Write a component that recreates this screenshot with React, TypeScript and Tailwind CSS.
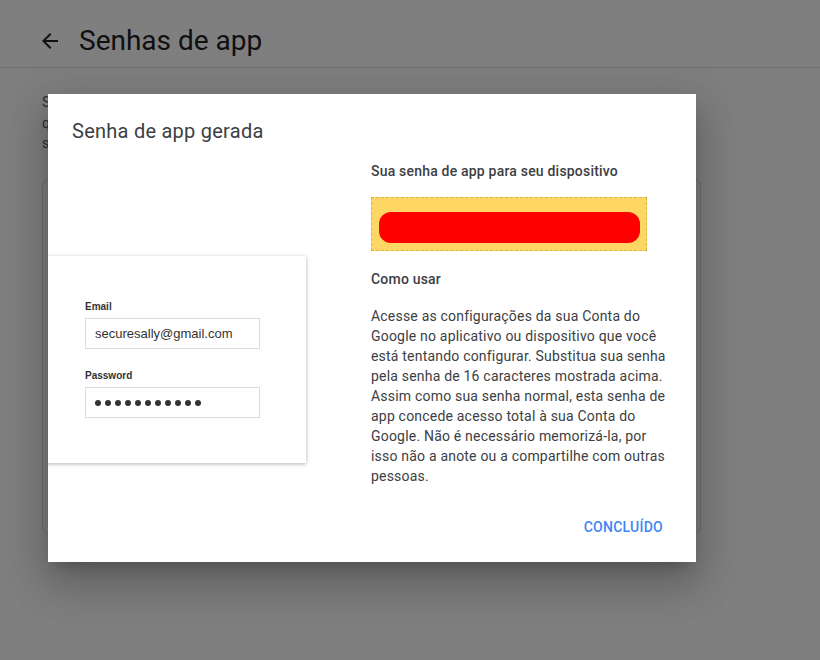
import React from 'react'

const roboto = { fontFamily: 'Roboto, "Noto Sans", Arial, sans-serif' }

function Illustration() {
  return (
    <div className="-ml-[30px] mt-[110px] h-[207px] w-[288px] bg-white pl-[67px] pt-[45px] shadow-[0_1px_4px_rgba(0,0,0,0.3)]" style={{ fontFamily: '"Liberation Sans", Arial, sans-serif' }}>
      <div className="text-[10px] font-bold leading-[12px] text-[#333]">Email</div>
      <div className="mt-[5px] flex h-[31px] w-[175px] items-center border border-[#dcdcdc] pl-[9px] text-[13px] text-[#333]">
        securesally@gmail.com
      </div>
      <div className="mt-[21px] text-[10px] font-bold leading-[12px] text-[#333]">Password</div>
      <div className="mt-[5px] flex h-[31px] w-[175px] items-center gap-[4px] border border-[#dcdcdc] pl-[9px]">
        {Array.from({ length: 11 }).map((_, i) => (
          <span key={i} className="h-[6px] w-[6px] shrink-0 rounded-full bg-[#333]" />
        ))}
      </div>
    </div>
  )
}

export default function App() {
  return (
    <div className="relative h-[660px] w-[820px] overflow-hidden bg-white" style={roboto}>
      {/* page behind the dialog */}
      <header className="flex h-[68px] items-center border-b border-[#dadce0] pl-[38px] pt-[14px]">
        <svg width="24" height="24" viewBox="0 0 24 24" className="fill-[#202124]">
          <path d="M20 11H7.83l5.59-5.59L12 4l-8 8 8 8 1.41-1.41L7.83 13H20v-2z" />
        </svg>
        <h1 className="ml-[17px] text-[28px] leading-[36px] text-[#202124]">Senhas de app</h1>
      </header>
      <div className="px-[42px]">
        <div className="mt-[24px] w-[640px] overflow-hidden text-[14px] leading-[20.5px] text-[#5f6368]">
          <div className="whitespace-nowrap">Senhas de app permitem fazer login na sua Conta do Google usando apps em dispositivos</div>
          <div className="whitespace-nowrap">que não são compatíveis com a verificação em duas etapas. Você só precisa inserir a</div>
          <div className="whitespace-nowrap">senha uma vez para não ter que se lembrar dela.</div>
        </div>
        <div className="mt-[24px] h-[357px] w-[659px] rounded-lg border border-[#dadce0]" />
      </div>

      {/* scrim */}
      <div className="absolute inset-0 bg-black/50" />

      {/* dialog */}
      <div className="absolute left-[48px] top-[94px] h-[468px] w-[648px] overflow-hidden bg-white shadow-[0_11px_15px_-7px_rgba(0,0,0,0.2),0_24px_38px_3px_rgba(0,0,0,0.14),0_9px_46px_8px_rgba(0,0,0,0.12)]">
        <h2 className="pl-[24px] pt-[22px] text-[20px] leading-[30px] tracking-[0.25px] text-[#3c4043]">Senha de app gerada</h2>
        <div className="flex">
          <div className="w-[323px] shrink-0">
            <Illustration />
          </div>
          <div className="w-[300px] pt-[15px] tracking-[0.2px]">
            <div className="text-[14px] font-medium leading-[20px] text-[#3c4043]">Sua senha de app para seu dispositivo</div>
            <div className="mt-[16px] h-[54px] w-[276px] border border-dashed border-[#d9b44a] bg-[#fdd663] pl-[7px] pt-[14px]">
              <div className="h-[31px] w-[261px] rounded-[12px] bg-[#ff0000]" />
            </div>
            <div className="mt-[18px] text-[14px] font-medium leading-[20px] text-[#3c4043]">Como usar</div>
            <p className="mt-[17px] text-[14px] leading-[20px] text-[#3c4043]">
              Acesse as configurações da sua Conta do Google no aplicativo ou dispositivo que você está tentando configurar.
              Substitua sua senha pela senha de 16 caracteres mostrada acima. Assim como sua senha normal, esta senha de app
              concede acesso total à sua Conta do Google. Não é necessário memorizá-la, por isso não a anote ou a compartilhe
              com outras pessoas.
            </p>
          </div>
        </div>
        <div className="mt-[23px] flex justify-end pr-[25px]">
          <button className="h-[36px] px-[8px] text-[14px] font-medium tracking-[0.25px] text-[#4285f4]">CONCLUÍDO</button>
        </div>
      </div>
    </div>
  )
}
